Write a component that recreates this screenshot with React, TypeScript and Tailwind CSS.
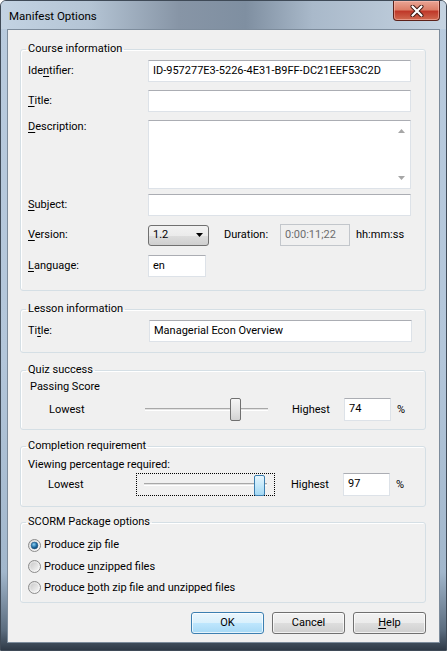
import type { ReactNode } from 'react';

const U = ({ children }: { children: ReactNode }) => <span className="underline underline-offset-[2px]">{children}</span>;

const textBox = 'flex items-center border border-[#dde2e8] border-t-[#abadb3] bg-white pl-[4px] text-black';
const btnBg = 'bg-[linear-gradient(to_bottom,#f2f2f2_0%,#ebebeb_50%,#dddddd_51%,#cfcfcf_100%)]';

function Radio({ checked }: { checked?: boolean }) {
  return (
    <svg width="13" height="13" viewBox="0 0 13 13" className="shrink-0">
      <defs>
        <linearGradient id="rbg" x1="0" y1="0" x2="1" y2="1">
          <stop offset="0" stopColor="#d7d7d7" />
          <stop offset="1" stopColor="#ffffff" />
        </linearGradient>
        <radialGradient id="rdot" cx="0.4" cy="0.35" r="0.7">
          <stop offset="0" stopColor="#8fd2f4" />
          <stop offset="0.6" stopColor="#1d6ba3" />
          <stop offset="1" stopColor="#0e3d62" />
        </radialGradient>
        <linearGradient id="rin" x1="0" y1="0" x2="1" y2="1">
          <stop offset="0" stopColor="#cbcbcb" />
          <stop offset="1" stopColor="#f4f4f4" />
        </linearGradient>
      </defs>
      <circle cx="6.5" cy="6.5" r="6" fill="url(#rbg)" stroke="#8a8a8a" />
      {checked ? (
        <circle cx="6.5" cy="6.5" r="3.4" fill="url(#rdot)" stroke="#2a5c86" strokeWidth="0.6" />
      ) : (
        <circle cx="6.5" cy="6.5" r="4" fill="url(#rin)" />
      )}
    </svg>
  );
}

function Track() {
  return <div className="h-[3px] w-full border-t border-[#a8a8a8] border-b border-b-white bg-[#e3e3e3]" />;
}

export default function App() {
  return (
    <div className="flex h-[651px] w-[447px] flex-col overflow-hidden rounded-t-[6px] border border-[#3f4a57] bg-[linear-gradient(to_bottom,#b9cbde_0%,#b3c6da_55%,#a2b7cc_88%,#5b6c7e_97%,#2f3a47_100%)] font-['Segoe_UI',Roboto,sans-serif] text-[11px] leading-[16px] text-black">
      {/* title bar */}
      <div className="flex h-[28px] shrink-0 items-start justify-between bg-[linear-gradient(to_right,#c3d3e3_0%,#b4c4d4_20%,#8795a6_40%,#7f8fa1_55%,#a9b9ca_70%,#c5d3e1_100%)] pl-[8px] pr-[6px]">
        <div className="pt-[7px] text-[11.5px] text-black">Manifest Options</div>
        <div className="flex h-[20px] w-[47px] items-center justify-center rounded-b-[4px] border border-t-0 border-[#5c2119] bg-[linear-gradient(to_bottom,#e9a595_0%,#dc7f69_45%,#c0392a_55%,#d06a50_100%)] shadow-[inset_0_0_0_1px_rgba(255,200,190,0.5)]">
          <svg width="14" height="12" viewBox="0 0 14 12">
            <path d="M2.5 1.5 L11.5 10.5 M11.5 1.5 L2.5 10.5" stroke="#3b1610" strokeWidth="4" strokeLinecap="round" />
            <path d="M2.5 1.5 L11.5 10.5 M11.5 1.5 L2.5 10.5" stroke="#ffffff" strokeWidth="2.2" strokeLinecap="round" />
          </svg>
        </div>
      </div>

      {/* client area */}
      <div className="mx-[6px] mb-[7px] flex flex-1 flex-col border border-[#7d8c9c] bg-[#f0f0f0] pl-[12px] pr-[13px] pt-[11px]">
        {/* Course information */}
        <fieldset className="rounded-[3px] border border-[#d5dfe5] px-[5px] pb-[13px] shadow-[inset_1px_1px_0_#ffffff]">
          <legend className="px-[2px] leading-[16px]">Course information</legend>
          <div className="flex flex-col pl-[2px] pt-[3px]">
            <div className="flex h-[22px] items-center">
              <div className="w-[120px]">Ide<U>n</U>tifier:</div>
              <div className={`${textBox} h-[22px] w-[263px]`}>ID-957277E3-5226-4E31-B9FF-DC21EEF53C2D</div>
            </div>
            <div className="mt-[8px] flex h-[22px] items-center">
              <div className="w-[120px]"><U>T</U>itle:</div>
              <div className={`${textBox} h-[22px] w-[263px]`} />
            </div>
            <div className="mt-[8px] flex h-[69px] items-start">
              <div className="-mt-[1px] w-[120px]"><U>D</U>escription:</div>
              <div className={`${textBox} h-[69px] w-[263px] justify-end pl-0`}>
                <div className="flex h-full w-[17px] flex-col items-center justify-between py-[8px]">
                  <svg width="7" height="4" viewBox="0 0 7 4"><path d="M0 4 L3.5 0 L7 4 Z" fill="#a6a6a6" /></svg>
                  <svg width="7" height="4" viewBox="0 0 7 4"><path d="M0 0 L3.5 4 L7 0 Z" fill="#a6a6a6" /></svg>
                </div>
              </div>
            </div>
            <div className="mt-[5px] flex h-[22px] items-center">
              <div className="w-[120px]"><U>S</U>ubject:</div>
              <div className={`${textBox} h-[22px] w-[263px]`} />
            </div>
            <div className="mt-[8px] flex h-[22px] items-center">
              <div className="w-[120px]"><U>V</U>ersion:</div>
              <div className={`flex h-[21px] w-[61px] items-center justify-between rounded-[3px] border border-[#707070] ${btnBg} pl-[4px] pr-[5px]`}>
                <span>1.2</span>
                <svg width="7" height="4" viewBox="0 0 7 4"><path d="M0 0 L7 0 L3.5 4 Z" fill="#000" /></svg>
              </div>
              <div className="ml-[15px] w-[56px]">Duration:</div>
              <div className="flex h-[22px] w-[70px] items-center border border-[#c2c6cb] bg-[#f0f0f0] pl-[4px] text-[#6d6d6d]">0:00:11;22</div>
              <div className="ml-[6px]">hh:mm:ss</div>
            </div>
            <div className="mt-[9px] flex h-[22px] items-center">
              <div className="w-[120px]"><U>L</U>anguage:</div>
              <div className={`${textBox} h-[22px] w-[58px]`}>en</div>
            </div>
          </div>
        </fieldset>

        {/* Lesson information */}
        <fieldset className="mt-[10px] rounded-[3px] border border-[#d5dfe5] px-[5px] pb-[10px] shadow-[inset_1px_1px_0_#ffffff]">
          <legend className="px-[2px] leading-[16px]">Lesson information</legend>
          <div className="mt-[3px] flex h-[22px] items-center pl-[2px]">
            <div className="w-[121px]">Ti<U>t</U>le:</div>
            <div className={`${textBox} h-[22px] w-[263px]`}>Managerial Econ Overview</div>
          </div>
        </fieldset>

        {/* Quiz success */}
        <fieldset className="mt-[9px] rounded-[3px] border border-[#d5dfe5] px-[5px] pb-[8px] shadow-[inset_1px_1px_0_#ffffff]">
          <legend className="px-[2px] leading-[16px]">Quiz success</legend>
          <div className="mt-[1px] pl-[4px]">Passing Score</div>
          <div className="mt-[3px] flex h-[23px] items-center pl-[23px]">
            <div className="w-[96px]">Lowest</div>
            <div className="relative flex h-[23px] w-[123px] items-center">
              <Track />
              <div className="absolute left-[85px] top-0 h-[23px] w-[11px] rounded-[2px] border border-[#707070] bg-[linear-gradient(to_bottom,#f6f6f6_0%,#e6e6e6_50%,#d2d2d2_100%)]" />
            </div>
            <div className="ml-[24px] w-[52px]">Highest</div>
            <div className={`${textBox} h-[23px] w-[47px] items-start pt-[2px]`}>74</div>
            <div className="ml-[6px]">%</div>
          </div>
        </fieldset>

        {/* Completion requirement */}
        <fieldset className="mt-[8px] rounded-[3px] border border-[#d5dfe5] px-[5px] pb-[10px] shadow-[inset_1px_1px_0_#ffffff]">
          <legend className="px-[2px] leading-[16px]">Completion requirement</legend>
          <div className="mt-[3px] pl-[2px]">Viewing percentage required:</div>
          <div className="flex h-[23px] items-center pl-[22px]">
            <div className="w-[88px]">Lowest</div>
            <div className="relative flex h-[23px] w-[139px] items-center border border-dotted border-black px-[7px]">
              <Track />
              <div className="absolute left-[117px] top-[1px] h-[21px] w-[11px] rounded-[2px] border border-[#3c7fb1] bg-[linear-gradient(to_bottom,#e5f5fd_0%,#c4e8fa_50%,#a3d8f4_100%)]" />
            </div>
            <div className="ml-[16px] w-[52px]">Highest</div>
            <div className={`${textBox} h-[23px] w-[47px] items-start pt-[2px]`}>97</div>
            <div className="ml-[6px]">%</div>
          </div>
        </fieldset>

        {/* SCORM Package options */}
        <fieldset className="mt-[7px] rounded-[3px] border border-[#d5dfe5] px-[5px] pb-[4px] shadow-[inset_1px_1px_0_#ffffff]">
          <legend className="px-[2px] leading-[16px]">SCORM Package options</legend>
          <div className="flex flex-col pl-[2px] pt-[4px]">
            <div className="flex h-[22px] items-center gap-[3px]">
              <Radio checked />
              <span>Produce <U>z</U>ip file</span>
            </div>
            <div className="flex h-[21px] items-center gap-[3px]">
              <Radio />
              <span>Produce <U>u</U>nzipped files</span>
            </div>
            <div className="flex h-[21px] items-center gap-[3px]">
              <Radio />
              <span>Produce <U>b</U>oth zip file and unzipped files</span>
            </div>
          </div>
        </fieldset>

        {/* buttons */}
        <div className="mt-[9px] flex justify-end gap-[8px]">
          <div className="flex h-[22px] w-[73px] items-center justify-center rounded-[3px] border border-[#3c7fb1] bg-[linear-gradient(to_bottom,#eaf6fd_0%,#d9f0fc_50%,#bee6fd_51%,#a7d9f5_100%)] shadow-[inset_0_0_0_1px_rgba(255,255,255,0.7)]">OK</div>
          <div className={`flex h-[22px] w-[73px] items-center justify-center rounded-[3px] border border-[#707070] ${btnBg} shadow-[inset_0_0_0_1px_rgba(255,255,255,0.7)]`}>Cancel</div>
          <div className={`flex h-[22px] w-[73px] items-center justify-center rounded-[3px] border border-[#707070] ${btnBg} shadow-[inset_0_0_0_1px_rgba(255,255,255,0.7)]`}><span><U>H</U>elp</span></div>
        </div>
      </div>
    </div>
  );
}
